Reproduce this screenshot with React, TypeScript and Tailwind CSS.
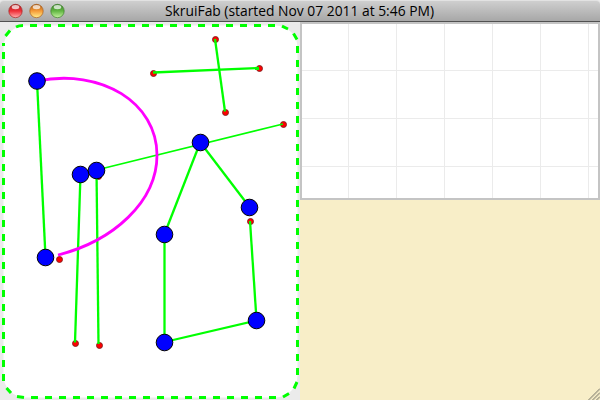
const nodes = [[37, 81], [45.5, 257.5], [80.5, 174.5], [96.5, 170.5], [200.5, 142.5], [249.5, 207.5], [164.5, 234.5], [164.5, 342.5], [256.5, 320.5]];
const dots = [[215.5, 39.5], [225.5, 112.5], [153.5, 73.5], [259.5, 68.5], [283.5, 124.5], [250.5, 221.5], [59.5, 259.5], [75.5, 343.5], [99.5, 345.5], [98.5, 176.5]];
const lines = [
  [37, 81, 45.5, 257], [80.5, 174, 75, 342.5], [96.5, 170, 98.5, 344], [215, 39, 225, 111.5],
  [153, 72.5, 259, 68], [200, 143, 164.5, 234], [200, 142, 249.5, 207], [164.5, 234, 164.5, 342],
  [164.5, 342, 256.5, 320.5], [250, 221, 256.5, 320],
];

function Light({ light, dark, glow }: { light: string; dark: string; glow: string }) {
  const id = "light" + dark.slice(1);
  return (
    <svg width="15" height="16" viewBox="0 0 15 16">
      <defs>
        <linearGradient id={id} x1="0" y1="0" x2="0" y2="1">
          <stop offset="0" stopColor={dark} />
          <stop offset="0.5" stopColor={light} />
          <stop offset="1" stopColor={glow} />
        </linearGradient>
      </defs>
      <circle cx="7.5" cy="8" r="6.7" fill={`url(#${id})`} stroke={dark} strokeOpacity="0.75" strokeWidth="0.9" />
      <ellipse cx="7.5" cy="4.1" rx="3.8" ry="2.2" fill="#fff" opacity="0.72" />
    </svg>
  );
}

function Sketch() {
  return (
    <svg className="block" width="300" height="378" viewBox="0 22 300 378">
      <rect x="3.5" y="25.5" width="294" height="372" rx="22" fill="#fff" />
      <g stroke="#00ff00" strokeWidth="3" fill="none">
        <path d="M30 25.5H275M31 397.5H276M3.5 52V381M297.5 46V375" strokeDasharray="7 7" />
        <path d="M16 27Q19 25.5 23 25.5M5.5 36L10 30.5M3.5 43V46M282 26.2L288 29M293.5 33.5L297 39.5M297 382L294 388.5M289 393.5L283 397M17 396.5L24 397.5M6.5 388L11 393" />
      </g>
      {dots.map(([x, y], i) => <circle key={i} cx={x} cy={y} r="3" fill="#f00" stroke="#802020" strokeWidth="0.9" />)}
      <path d="M96.5 170L283 124" stroke="#00ff00" strokeWidth="1.8" />
      {lines.map(([a, b, c, d], i) => <line key={i} x1={a} y1={b} x2={c} y2={d} stroke="#00ff00" strokeWidth="2.3" />)}
      <path d="M37 81C102 68 157 103 157 155C157 202 113 241 58 255" fill="none" stroke="#f0f" strokeWidth="2.8" />
      {nodes.map(([x, y], i) => <circle key={i} cx={x} cy={y} r="8.3" fill="#00f" stroke="#000" strokeWidth="1" />)}
    </svg>
  );
}

export default function App() {
  return (
    <div className="flex h-[400px] w-[600px] flex-col overflow-hidden bg-[#ebebeb]">
      <header className="flex h-[22px] items-center rounded-t-[4px] border-t border-b border-t-[#e2e2e2] border-b-[#515151] bg-linear-to-b from-[#cfcfcf] to-[#a7a7a7] pl-[7.5px]">
        <div className="flex w-[157px] gap-[6px]">
          <Light dark="#a3201f" light="#ef3038" glow="#ffb0b0" />
          <Light dark="#a85a14" light="#f59b38" glow="#fff08d" />
          <Light dark="#397e27" light="#63b744" glow="#c5f3a0" />
        </div>
        <svg className="block overflow-visible" width="269" height="20">
          <text x="0" y="15" textLength="269" lengthAdjust="spacingAndGlyphs" fontSize="14" fontFamily="'Open Sans', 'Noto Sans', sans-serif" fill="#000">SkruiFab (started Nov 07 2011 at 5:46 PM)</text>
        </svg>
      </header>
      <main className="flex h-[378px]">
        <Sketch />
        <section className="flex w-[300px] flex-col bg-[#f8eec8]">
          <div className="h-[178px] border-2 border-[#c4c4c4] bg-white">
            <svg className="block" width="296" height="174" viewBox="302 24 296 174">
              <path d="M348.5 24V198M396.5 24V198M444.5 24V198M492.5 24V198M540.5 24V198M588.5 24V198M302 70.5H598M302 118.5H598M302 166.5H598" stroke="#ebebeb" strokeWidth="1" />
            </svg>
          </div>
          <svg className="mt-auto ml-auto block" width="12" height="12" viewBox="0 0 12 12">
            <path d="M0.5 12L12 0.5M4.5 12L12 4.5M8.5 12L12 8.5" stroke="#777568" strokeWidth="1" />
            <path d="M2 12L12 2M6 12L12 6M10 12L12 10" stroke="#d8d0b2" strokeWidth="0.8" />
          </svg>
        </section>
      </main>
    </div>
  );
}
